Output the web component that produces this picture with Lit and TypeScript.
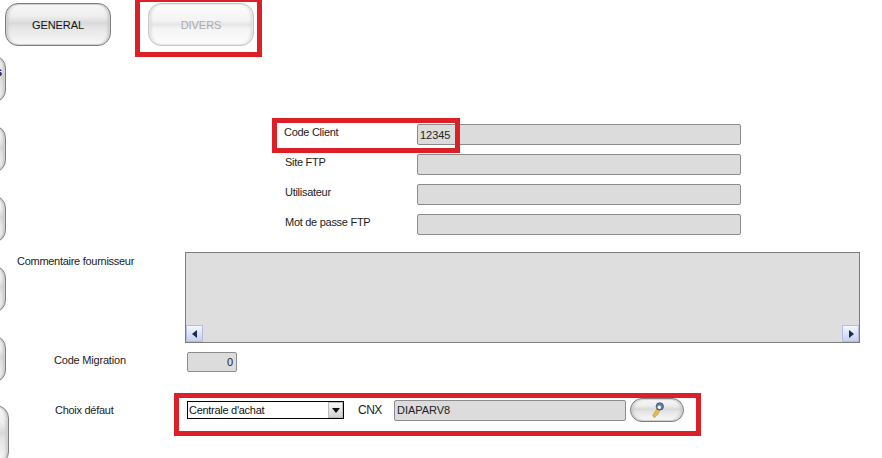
import { LitElement, html, css, svg } from "lit";
import { customElement } from "lit/decorators.js";

@customElement("app-root")
export class AppRoot extends LitElement {
  static styles = css`
    :host { display: block; width: 882px; height: 458px; background: #fff; font: 11px "Liberation Sans", Arial, sans-serif; color: #222; letter-spacing: -0.28px; }
    .page { position: relative; width: 882px; height: 458px; overflow: hidden; display: flex; flex-direction: column; }
    .gel { box-sizing: border-box; border: 1px solid #7d7d7d; border-radius: 13px; box-shadow: inset 0 0 0 1px #d2d2d2, inset 3px 0 3px -1px #c4c4c4, inset -3px 0 3px -1px #c4c4c4; background: linear-gradient(#f8f8f8 0%, #eeeeee 30%, #d9d9d9 47%, #e4e4e4 56%, #f9f9f9 100%); display: flex; align-items: center; justify-content: center; }
    .tabs { display: flex; gap: 37px; padding: 3px 0 0 5px; height: 55px; box-sizing: border-box; }
    .tab { width: 106px; height: 43px; color: #111; letter-spacing: -0.05px; }
    .tab.off { color: #aaa; border-color: #c6c6c6; box-shadow: inset 0 0 0 1px #e8e8e8, inset 3px 0 3px -1px #d8d8d8, inset -3px 0 3px -1px #d8d8d8; background: linear-gradient(#fcfcfc 0%, #f4f4f4 40%, #e6e6e6 50%, #f4f4f4 60%, #fdfdfd 100%); }
    .body { display: flex; flex: 1; min-height: 0; }
    .rail { width: 10px; flex: none; display: flex; flex-direction: column; gap: 22px; overflow: hidden; }
    .side { width: 106px; height: 48px; flex: none; margin-left: -100px; justify-content: flex-end; padding: 0 3px 14px 0; color: #1c2060; font-weight: bold; font-size: 12px; }
    .side.last { margin-left: -97px; height: 60px; }
    .form { flex: 1; display: flex; flex-direction: column; padding-top: 69px; }
    .fields { display: grid; grid-template-columns: 133px 324px; row-gap: 9px; margin-left: 274px; }
    .lab { align-self: center; padding-bottom: 6px; }
    .lab.in { padding-left: 1px; }
    .inp { box-sizing: border-box; height: 21px; background: #dcdcdc; border: 1px solid #8c8c8c; border-radius: 2px; display: flex; align-items: center; padding: 0 2px; color: #222; letter-spacing: -0.05px; }
    .comment { display: flex; margin-top: 17px; margin-left: 7px; }
    .comment .lab { width: 168px; align-self: flex-start; padding-top: 3px; }
    .area { box-sizing: border-box; width: 675px; height: 91px; background: #dedede; border: 1px solid #7e7e7e; display: flex; align-items: flex-end; justify-content: space-between; }
    .sb { width: 17px; height: 17px; background: linear-gradient(#f4f6fc, #c6d0ee); border: 1px solid #b0bce0; box-sizing: border-box; display: flex; align-items: center; justify-content: center; }
    .mig { display: flex; margin-top: 9px; margin-left: 44px; align-items: center; }
    .mig .lab { width: 133px; padding-bottom: 5px; letter-spacing: -0.2px; }
    .mig .inp { width: 50px; height: 20px; justify-content: flex-end; padding-right: 3px; }
    .choice { display: flex; align-items: center; margin-top: 26px; margin-left: 45px; }
    .choice .lab { width: 132px; padding-bottom: 0; }
    .select { box-sizing: border-box; width: 157px; height: 18px; border: 1px solid #000; background: #fff; display: flex; align-items: center; justify-content: space-between; padding-left: 1px; color: #111; }
    .arrow { width: 15px; height: 16px; background: linear-gradient(#fafafa, #cfcfcf); display: flex; align-items: center; justify-content: center; box-shadow: inset 0 0 0 1px #bbb; }
    .cnx { width: 36px; margin-left: 14px; font-size: 12px; letter-spacing: -0.5px; }
    .choice .inp { width: 232px; }
    .pill { width: 54px; height: 24px; margin-left: 4px; border-radius: 12px; }
    .mark { position: absolute; box-sizing: border-box; border: 5px solid #dd2027; pointer-events: none; }
    .m1 { left: 135px; top: -3px; width: 127px; height: 60px; }
    .m2 { left: 272px; top: 118px; width: 188px; height: 35px; }
    .m3 { left: 174px; top: 393px; width: 527px; height: 43px; }
  `;

  render() {
    const tri = (d: string) => svg`<svg width="6" height="8" viewBox="0 0 6 8"><path d="${d}" fill="#1d2a4a"/></svg>`;
    return html`<div class="page">
      <div class="tabs">
        <div class="gel tab">GENERAL</div>
        <div class="gel tab off">DIVERS</div>
      </div>
      <div class="body">
        <div class="rail">
          <div class="gel side"><span>s</span></div>
          <div class="gel side"></div>
          <div class="gel side"></div>
          <div class="gel side"></div>
          <div class="gel side"></div>
          <div class="gel side last"></div>
        </div>
        <div class="form">
          <div class="fields">
            <div class="lab">Code Client</div><div class="inp">12345</div>
            <div class="lab in">Site FTP</div><div class="inp"></div>
            <div class="lab in">Utilisateur</div><div class="inp"></div>
            <div class="lab in">Mot de passe FTP</div><div class="inp"></div>
          </div>
          <div class="comment">
            <div class="lab">Commentaire fournisseur</div>
            <div class="area">
              <div class="sb">${tri("M5 0v8L0 4z")}</div>
              <div class="sb">${tri("M1 0v8l5-4z")}</div>
            </div>
          </div>
          <div class="mig"><div class="lab">Code Migration</div><div class="inp">0</div></div>
          <div class="choice">
            <div class="lab">Choix défaut</div>
            <div class="select"><span>Centrale d'achat</span><span class="arrow"><svg width="8" height="5" viewBox="0 0 8 5"><path d="M0 0h8L4 5z" fill="#111"/></svg></span></div>
            <div class="cnx">CNX</div>
            <div class="inp">DIAPARV8</div>
            <div class="gel pill">
              <svg width="13" height="16" viewBox="0 0 13 16">
                <path d="M6 7L1.800 13.200 3 15.500 4.500 14.800 5.200 13.500 6.500 12.800 9 8z" fill="#e6bd4c" stroke="#b98f22" stroke-width=".6"/>
                <circle cx="8.800" cy="4.400" r="3.700" fill="#5c7fa6" stroke="#33475f" stroke-width=".7"/>
                <circle cx="8.300" cy="5.200" r="1.700" fill="#fff"/>
              </svg>
            </div>
          </div>
        </div>
      </div>
      <div class="mark m1"></div><div class="mark m2"></div><div class="mark m3"></div>
    </div>`;
  }
}
